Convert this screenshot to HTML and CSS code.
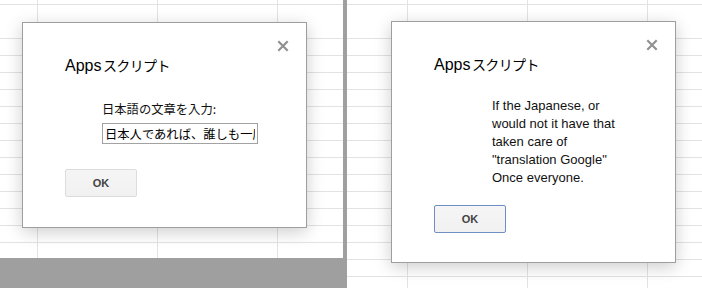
FILE: index.html
```html
<!DOCTYPE html>
<html lang="ja">
<head>
<meta charset="utf-8">
<title>Apps スクリプト</title>
<link rel="stylesheet" href="styles.css">
</head>
<body>
<div class="screen">
  <div class="left-col">
    <div class="sheet sheet-left">
      <div class="dialog dialog-left">
        <span class="close"><svg width="12" height="12" viewBox="0 0 12 12"><path d="M1.3 1.3L10.7 10.7M10.7 1.3L1.3 10.7" stroke="#919191" stroke-width="2.2" fill="none"/></svg></span>
        <div class="title">Apps <span class="kana">スクリプト</span></div>
        <div class="prompt">
          <div class="label">日本語の文章を入力:</div>
          <input class="field" type="text" value="日本人であれば、誰しも一度は「Google翻訳」のお世話になったことがあるのではないでしょうか。">
        </div>
        <button class="btn">OK</button>
      </div>
    </div>
  </div>
  <div class="sheet sheet-right">
    <div class="dialog dialog-right">
      <span class="close"><svg width="12" height="12" viewBox="0 0 12 12"><path d="M1.3 1.3L10.7 10.7M10.7 1.3L1.3 10.7" stroke="#919191" stroke-width="2.2" fill="none"/></svg></span>
      <div class="title">Apps <span class="kana">スクリプト</span></div>
      <div class="message">If the Japanese, or would not it have that taken care of "translation Google" Once everyone.</div>
      <button class="btn btn-focus">OK</button>
    </div>
  </div>
</div>
</body>
</html>
```
FILE: styles.css
```css
html, body {
  margin: 0;
  padding: 0;
  background: #fff;
}
body {
  width: 702px;
  height: 288px;
  overflow: hidden;
  font-family: "Liberation Sans", Arial, "Noto Sans CJK JP", sans-serif;
}
.screen {
  display: flex;
  width: 702px;
  height: 288px;
}
.left-col {
  width: 347px;
  height: 288px;
  background: #9f9f9f;
  flex: none;
}
.sheet {
  position: relative;
  background-color: #fff;
  background-repeat: repeat-x, no-repeat, no-repeat;
}
.sheet-left {
  width: 343px;
  height: 258px;
  background-image:
    linear-gradient(to right, #e3e3e3 1px, transparent 1px),
    repeating-linear-gradient(to bottom, #e3e3e3 0 1px, transparent 1px 17px),
    linear-gradient(#e3e3e3, #e3e3e3);
  background-size: 120px 100%, 100% calc(100% - 38px), 100% 1px;
  background-position: 37px 0, 0 38px, 0 4px;
}
.sheet-right {
  flex: 1;
  height: 288px;
  background-image:
    linear-gradient(to right, #e3e3e3 1px, transparent 1px),
    repeating-linear-gradient(to bottom, #e3e3e3 0 1px, transparent 1px 17px),
    linear-gradient(#e3e3e3, #e3e3e3);
  background-size: 120px 100%, 100% calc(100% - 38px), 100% 1px;
  background-position: 60px 0, 0 38px, 0 4px;
}
.dialog {
  position: absolute;
  box-sizing: border-box;
  width: 285px;
  background: #fff;
  border: 1px solid #9e9e9e;
  box-shadow: 0 4px 16px rgba(0, 0, 0, 0.2);
  padding: 30px 42px;
  color: #000;
}
.dialog-left {
  left: 22px;
  top: 22px;
  height: 206px;
}
.dialog-right {
  left: 44px;
  top: 21px;
  height: 242px;
}
.close {
  position: absolute;
  top: 17px;
  right: 17px;
  width: 12px;
  height: 12px;
  display: block;
}
.close svg {
  display: block;
}
.title {
  font-size: 16px;
  line-height: 24px;
  white-space: nowrap;
  word-spacing: -3px;
}
.kana {
  font-family: "Noto Sans CJK JP", sans-serif;
  font-size: 14px;
  letter-spacing: -0.6px;
  word-spacing: 0;
}
.prompt {
  margin: 22px 0 0 37px;
}
.label {
  font-family: "Noto Sans CJK JP", sans-serif;
  font-size: 12.3px;
  line-height: 18px;
  color: #111;
}
.field {
  display: block;
  box-sizing: border-box;
  margin: 5px 0 0;
  width: 156px;
  height: 21px;
  padding: 0 2px;
  border: 1px solid #a2a2a2;
  font-family: "Noto Sans CJK JP", sans-serif;
  font-size: 12.3px;
  color: #000;
  background: #fff;
  outline: none;
}
.message {
  margin: 20px 0 0 58px;
  width: 130px;
  font-size: 13px;
  line-height: 18px;
  color: #111;
}
.btn {
  display: block;
  box-sizing: border-box;
  width: 72px;
  height: 28px;
  padding: 0;
  border: 1px solid #dcdcdc;
  border-radius: 2px;
  background: linear-gradient(#f5f5f5, #f1f1f1);
  color: #444;
  font-family: "Liberation Sans", Arial, sans-serif;
  font-size: 11px;
  font-weight: bold;
}
.dialog-left .btn {
  margin-top: 25px;
}
.dialog-right .btn {
  margin-top: 18px;
}
.btn-focus {
  border-color: #6f8fc4;
}
```
